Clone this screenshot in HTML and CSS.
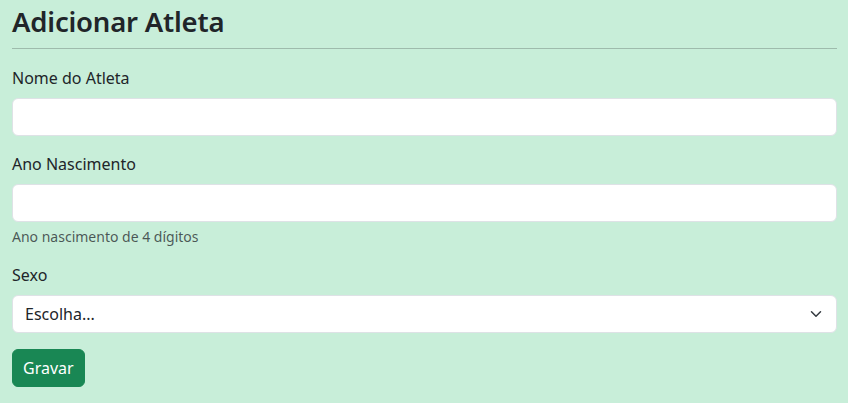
FILE: index.html
```html
<!DOCTYPE html>
<html lang="pt">
<head>
<meta charset="utf-8">
<title>Adicionar Atleta</title>
<link rel="stylesheet" href="styles.css">
</head>
<body>
<main class="page">
  <h2 class="title">Adicionar Atleta</h2>
  <hr class="rule">
  <form class="form">
    <div class="field">
      <label class="label" for="nome">Nome do Atleta</label>
      <input class="control" id="nome" type="text">
    </div>
    <div class="field">
      <label class="label" for="ano">Ano Nascimento</label>
      <input class="control" id="ano" type="text">
      <div class="help">Ano nascimento de 4 dígitos</div>
    </div>
    <div class="field">
      <label class="label" for="sexo">Sexo</label>
      <div class="select-wrap">
        <select class="control select" id="sexo">
          <option>Escolha...</option>
        </select>
        <svg class="chevron" width="16" height="12" viewBox="0 0 16 16" aria-hidden="true">
          <path d="M2 5l6 6 6-6" fill="none" stroke="#343a40" stroke-width="2" stroke-linecap="round" stroke-linejoin="round"/>
        </svg>
      </div>
    </div>
    <button class="btn" type="button">Gravar</button>
  </form>
</main>
</body>
</html>
```

FILE: styles.css
```css
* { box-sizing: border-box; }
html, body {
  margin: 0;
  background: #c8eed9;
}
body {
  font-family: "Noto Sans", "Liberation Sans", sans-serif;
  font-size: 16px;
  line-height: 1.5;
  color: #212529;
}
.page {
  padding: 5px 11px 0 12px;
}
.title {
  margin: 0 0 10px;
  font-size: 27.5px;
  font-weight: 600;
  line-height: 33px;
  letter-spacing: -0.2px;
}
.rule {
  margin: 0 0 17px;
  border: 0;
  border-top: 1px solid #212529;
  opacity: 0.25;
}
.form {
  display: flex;
  flex-direction: column;
  gap: 16px;
  align-items: flex-start;
}
.field {
  display: flex;
  flex-direction: column;
  width: 100%;
}
.label {
  display: block;
  margin-bottom: 8px;
}
.control {
  display: block;
  width: 100%;
  height: 38px;
  padding: 6px 12px;
  font: inherit;
  color: #212529;
  background: #fff;
  border: 1px solid #dee2e6;
  border-radius: 6px;
  outline: none;
}
.help {
  margin-top: 4px;
  font-size: 14px;
  line-height: 21px;
  color: rgba(33, 37, 41, 0.75);
}
.select-wrap {
  position: relative;
  width: 100%;
}
.select {
  appearance: none;
  -webkit-appearance: none;
  padding-right: 36px;
}
.chevron {
  position: absolute;
  right: 13px;
  top: 13px;
  pointer-events: none;
}
.btn {
  height: 38px;
  padding: 6px 10px;
  font: inherit;
  color: #fff;
  background: #198754;
  border: 1px solid #198754;
  border-radius: 6px;
}
```
